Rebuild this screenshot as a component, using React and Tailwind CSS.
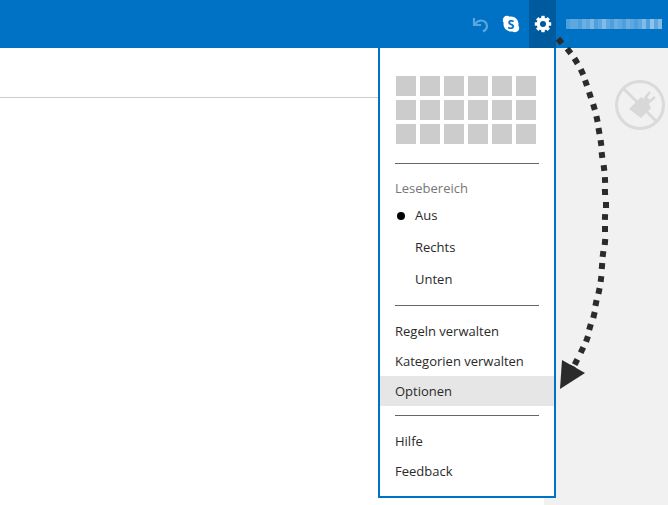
import React from "react";

const font = { fontFamily: '"Open Sans", "Noto Sans", sans-serif' };

// centre points of the dotted arrow squares, read off the picture
const dots = [
  [560, 41], [569, 51], [576, 61], [582, 72], [586, 83], [590, 95], [594, 107],
  [597, 119], [599, 131], [601, 143], [602, 155], [604, 168], [605, 180], [605, 192],
  [606, 205], [605, 217], [605, 229], [605, 242], [603, 254], [602, 266], [601, 279],
  [599, 291], [596, 303], [594, 315], [590, 327], [587, 339], [582, 350], [576, 362],
];

const nameBlocks = [
  "#4f9fdc", "#5ea8df", "#5ea8df", "#4f9fdc", "#6bafe2", "#5ea8df", "#7ab7e5", "#4f9fdc",
  "#5ea8df", "#82bce6", "#5ea8df", "#4f9fdc", "#6bafe2", "#5ea8df", "#4f9fdc", "#6bafe2",
  "#5ea8df", "#4f9fdc", "#5ea8df", "#82bce6", "#4f9fdc", "#8fc3e9", "#5ea8df", "#82bce6",
];

function UndoIcon() {
  return (
    <svg width="18" height="18" viewBox="0 0 18 18" fill="none">
      <path d="M3 3 V10 H10 M3.500 9.500 C5.500 7 7.500 5.500 10 5.500 C13.500 5.500 16 8 16 11 C16 13 15 15 12 16.500" stroke="#5aa5dc" strokeWidth="2.200" />
    </svg>
  );
}

function SkypeIcon() {
  return (
    <svg width="18" height="18" viewBox="0 0 18 18">
      <path fill="#fff" d="M5 .8c1 0 1.800.3 2.500.9C8 1.500 8.500 1.500 9 1.500c4.100 0 7.500 3.400 7.500 7.500 0 .6-.1 1.100-.2 1.600.5.700.9 1.500.9 2.500 0 2.400-1.900 4.100-4.200 4.100-1 0-1.900-.3-2.500-.8-.5.100-1 .2-1.500.2-4.100 0-7.500-3.400-7.500-7.500 0-.5.100-1 .2-1.500C1.200 7.300.8 6.400.8 5.400.8 2.800 2.700.8 5 .8Z" />
      <text x="9" y="13.500" textAnchor="middle" fontSize="12.500" fontWeight="700" fill="#0072c6" style={font}>S</text>
    </svg>
  );
}

function GearIcon() {
  return (
    <svg width="18" height="18" viewBox="0 0 18 18">
      <circle cx="9" cy="9" r="4.700" fill="none" stroke="#fff" strokeWidth="3.400" />
      {[0, 45, 90, 135, 180, 225, 270, 315].map((a) => (
        <rect key={a} x="7.300" y="0.800" width="3.400" height="3.400" fill="#fff" transform={`rotate(${a} 9 9)`} />
      ))}
    </svg>
  );
}

function NoPlugIcon() {
  return (
    <svg width="52" height="52" viewBox="0 0 52 52" fill="none">
      <circle cx="26" cy="26" r="23.500" stroke="#dadada" strokeWidth="3" />
      <path d="M9 9 L43 43" stroke="#dadada" strokeWidth="3" />
      <path fill="#d8d8d8" d="M15 30 L27 18 L30 20 L32 17 L37 22 L35 25 L37 29 L27 39 Z" />
      <path d="M31 19 L36 13 M35 23 L41 18" stroke="#d8d8d8" strokeWidth="2.500" />
    </svg>
  );
}

function Divider({ className = "" }) {
  return <div className={`mx-[15px] h-px bg-[#666] ${className}`} />;
}

function MenuItem({ label, active }) {
  return (
    <div className={`h-[30px] pt-px px-[15px] flex items-center text-[13px] text-[#2a2a2a] ${active ? "bg-[#e6e6e6]" : ""}`}>
      {label}
    </div>
  );
}

function RadioItem({ label, checked }) {
  return (
    <div className="h-8 pl-[17px] flex items-center text-[13px] text-[#2a2a2a]">
      <span className={`w-2 h-2 rounded-full mr-[10px] ${checked ? "bg-black" : ""}`} />
      {label}
    </div>
  );
}

export default function App() {
  return (
    <div className="relative w-[668px] h-[505px] overflow-hidden bg-white flex flex-col" style={font}>
      <header className="h-12 bg-[#0072c6] flex justify-end shrink-0">
        <div className="w-[36px] flex items-center justify-center"><UndoIcon /></div>
        <div className="w-[26px] mr-[5px] flex items-center justify-center"><SkypeIcon /></div>
        <div className="w-[27px] flex items-center justify-center bg-[#005a9e]"><GearIcon /></div>
        <div className="w-[112px] pl-[10px] flex items-center">
          <div className="grid grid-cols-[repeat(24,4px)] h-[10px]">
            {nameBlocks.map((c, i) => (
              <span key={i} style={{ backgroundColor: c }} />
            ))}
          </div>
        </div>
      </header>

      <div className="flex-1 flex">
        <div className="flex-1">
          <div className="h-[50px] border-b border-[#ccc]" />
        </div>
        <aside className="w-[124px] bg-[#f1f1f1] flex justify-end pt-[31px] pr-[2px]">
          <div className="h-[52px]"><NoPlugIcon /></div>
        </aside>
      </div>

      {/* dropdown */}
      <div className="absolute left-[378px] top-[48px] w-[178px] h-[450px] bg-white border-2 border-t-0 border-[#0072c6]">
        <div className="pt-[28px] pl-[16px] grid grid-cols-[repeat(6,20px)] auto-rows-[20px] gap-1">
          {Array.from({ length: 18 }).map((_, i) => (
            <div key={i} className="bg-[#ccc]" />
          ))}
        </div>
        <Divider className="mt-[19px]" />
        <div className="mt-[15px] px-[15px] h-5 flex items-center text-[13px] text-[#767676]">Lesebereich</div>
        <div className="mt-[1px]">
          <RadioItem label="Aus" checked />
          <RadioItem label="Rechts" />
          <RadioItem label="Unten" />
        </div>
        <Divider className="mt-[9px]" />
        <div className="mt-[10px]">
          <MenuItem label="Regeln verwalten" />
          <MenuItem label="Kategorien verwalten" />
          <MenuItem label="Optionen" active />
        </div>
        <Divider className="mt-[9px]" />
        <div className="mt-[10px]">
          <MenuItem label="Hilfe" />
          <MenuItem label="Feedback" />
        </div>
      </div>

      {/* annotation arrow */}
      <svg className="absolute inset-0 pointer-events-none" width="668" height="505" viewBox="0 0 668 505">
        {dots.map(([x, y], i) => {
          const [px, py] = dots[Math.max(i - 1, 0)];
          const [nx, ny] = dots[Math.min(i + 1, dots.length - 1)];
          const angle = (Math.atan2(ny - py, nx - px) * 180) / Math.PI;
          return <rect key={i} x={x - 3} y={y - 3} width="6" height="6" fill="#2b2b2b" transform={`rotate(${angle} ${x} ${y})`} />;
        })}
        <path d="M573 366 L570 372" stroke="#2b2b2b" strokeWidth="6" />
        <path d="M560 389 L562 360 L585 373 Z" fill="#2b2b2b" />
      </svg>
    </div>
  );
}
